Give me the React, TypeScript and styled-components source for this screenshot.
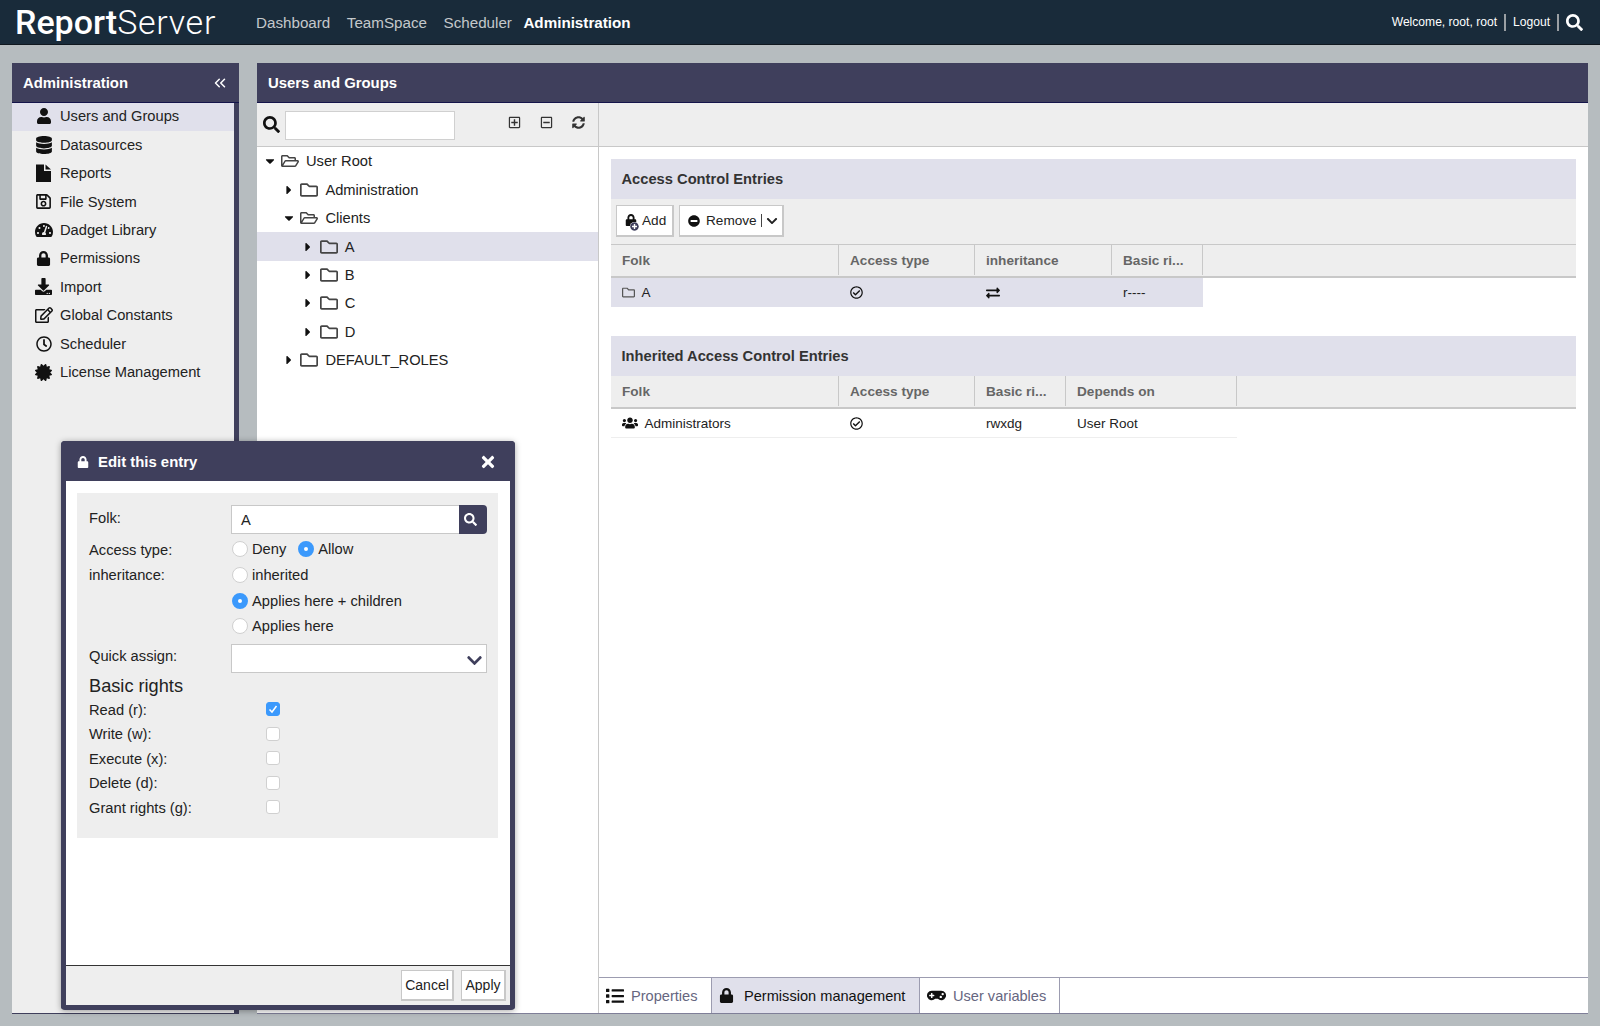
import React from 'react';
import styled, { createGlobalStyle } from 'styled-components';
import {
    FaCaretDown,
    FaCaretRight,
    FaCertificate,
    FaChevronDown,
    FaDatabase,
    FaDownload,
    FaExchangeAlt,
    FaGamepad,
    FaList,
    FaLock,
    FaMinusCircle,
    FaPlusCircle,
    FaRegCheckCircle,
    FaRegClock,
    FaRegEdit,
    FaRegFolder,
    FaRegFolderOpen,
    FaRegMinusSquare,
    FaRegPlusSquare,
    FaRegSave,
    FaSearch,
    FaSyncAlt,
    FaTachometerAlt,
    FaTimes,
    FaUser,
    FaUsers,
} from 'react-icons/fa';
import { FiChevronsLeft } from 'react-icons/fi';

const navy = '#3f3f5c';
const lilac = '#e0e0eb';
const panelGrey = '#eeeeee';
const lineGrey = '#c8c8c8';
const rowHeight = '28.45px';

const GlobalStyle = createGlobalStyle`
    html, body {
        margin: 0;
        padding: 0;
        background: #b6bcbf;
    }
    body {
        font-family: "Liberation Sans", Arial, sans-serif;
        font-size: 14.7px;
        color: #222;
    }
`;

const Page = styled.div`
    position: relative;
    width: 1600px;
    height: 1026px;
    display: flex;
    flex-direction: column;
    overflow: hidden;
`;

const TopBar = styled.header`
    height: 44px;
    flex: none;
    background: #192b3a;
    border-bottom: 1px solid #10181f;
    display: flex;
    align-items: center;
    padding: 0 17px 0 15px;
`;

const Logo = styled.div`
    width: 241px;
    font-family: Roboto, sans-serif;
    font-size: 34px;
    line-height: 44px;
    color: #fff;
    font-weight: 500;
    span {
        font-weight: 300;
        letter-spacing: 0.7px;
    }
`;

const TopNav = styled.nav`
    display: flex;
    gap: 16.5px;
    flex: 1;
`;

const TopLink = styled.a<{ $active?: boolean }>`
    color: ${({ $active }) => ($active ? '#fff' : '#c4c8cb')};
    font-weight: ${({ $active }) => ($active ? 700 : 400)};
    font-size: 15.2px;
    margin-left: ${({ $active }) => ($active ? '-5px' : '0')};
`;

const UserBox = styled.div`
    display: flex;
    align-items: center;
    color: #fff;
    font-size: 12.1px;
    gap: 7px;
`;

const Divider = styled.span`
    width: 2px;
    height: 17px;
    background: #9a9fa3;
`;

const Workspace = styled.main`
    flex: 1;
    min-height: 0;
    display: flex;
    gap: 18px;
    padding: 18px 12px 12px 12px;
`;

const PanelHeader = styled.div`
    height: 40px;
    flex: none;
    box-sizing: border-box;
    background: ${navy};
    border-bottom: 1px solid #14144a;
    color: #fff;
    font-weight: 700;
    font-size: 14.9px;
    display: flex;
    align-items: center;
    justify-content: space-between;
    padding: 0 10px 0 11px;
`;

const SidePanel = styled.aside`
    width: 227px;
    flex: none;
    display: flex;
    flex-direction: column;
`;

const SideBody = styled.div`
    flex: 1;
    background: ${panelGrey};
    border-right: 5px solid ${navy};
    border-bottom: 1px solid ${navy};
`;

const NavRow = styled.div<{ $selected?: boolean }>`
    height: ${rowHeight};
    box-sizing: border-box;
    padding-bottom: 2px;
    display: flex;
    align-items: center;
    background: ${({ $selected }) => ($selected ? lilac : 'transparent')};
`;

const NavIcon = styled.span`
    width: 48px;
    padding-left: 15px;
    box-sizing: border-box;
    flex: none;
    display: flex;
    justify-content: center;
    color: #111;
`;

const MainPanel = styled.section`
    flex: 1;
    min-width: 0;
    display: flex;
    flex-direction: column;
`;

const MainBody = styled.div`
    flex: 1;
    min-height: 0;
    display: flex;
    background: #fff;
    border-bottom: 1px solid #7f7f98;
`;

const TreePane = styled.div`
    width: 341px;
    flex: none;
    border-right: 1px solid ${lineGrey};
    display: flex;
    flex-direction: column;
`;

const PaneToolbar = styled.div`
    height: 44px;
    flex: none;
    box-sizing: border-box;
    background: ${panelGrey};
    border-bottom: 1px solid ${lineGrey};
    display: flex;
    align-items: center;
`;

const SearchInput = styled.input`
    width: 170px;
    height: 29px;
    box-sizing: border-box;
    margin: 1px 0 0 5px;
    border: 1px solid #d0d0d0;
    background: #fff;
    outline: none;
`;

const SearchMark = styled.span`
    display: flex;
    margin-left: 6px;
    font-size: 17px;
    color: #111;
`;

const TreeTools = styled.div`
    display: flex;
    gap: 19px;
    margin-left: 53px;
    margin-top: -4px;
    color: #333;
    font-size: 13px;
`;

const TreeList = styled.div`
    padding-top: 0;
`;

const TreeRow = styled.div<{ $depth: number; $selected?: boolean }>`
    height: ${rowHeight};
    display: flex;
    align-items: center;
    padding-left: ${({ $depth }) => 4 + $depth * 19.4}px;
    background: ${({ $selected }) => ($selected ? lilac : 'transparent')};
`;

const Caret = styled.span`
    width: 17px;
    flex: none;
    display: flex;
    justify-content: center;
    font-size: 14px;
    color: #111;
`;

const FolderIcon = styled.span`
    width: 25px;
    margin-left: 3px;
    flex: none;
    display: flex;
    font-size: 18px;
    color: #444;
`;

const ContentPane = styled.div`
    flex: 1;
    min-width: 0;
    display: flex;
    flex-direction: column;
`;

const ContentScroll = styled.div`
    flex: 1;
    min-height: 0;
    padding: 12px 12px 0 11.5px;
`;

const Section = styled.div<{ $gap?: number }>`
    margin-bottom: ${({ $gap }) => $gap || 0}px;
`;

const SectionTitle = styled.div`
    height: 40px;
    background: ${lilac};
    display: flex;
    align-items: center;
    padding-left: 11px;
    font-weight: 700;
    font-size: 14.7px;
    color: #333;
`;

const ActionBar = styled.div`
    height: 45px;
    box-sizing: border-box;
    background: ${panelGrey};
    display: flex;
    align-items: flex-start;
    padding: 6px 0 0 5.5px;
    gap: 5px;
`;

const ToolButton = styled.button<{ $width: number }>`
    width: ${({ $width }) => $width}px;
    height: 32px;
    box-sizing: border-box;
    background: #fff;
    border: 1px solid ${lineGrey};
    border-width: 1px 2px 2px 1px;
    padding: 0 0 0 8px;
    display: flex;
    align-items: center;
    font: inherit;
    font-size: 13.6px;
    color: #222;
`;

const LockBadge = styled.span`
    position: relative;
    display: flex;
    font-size: 12px;
    color: #111;
    margin-right: 5px;
    margin-top: -2px;
    svg + svg {
        position: absolute;
        right: -2px;
        bottom: -5px;
        font-size: 9px;
        color: ${navy};
        background: #fff;
        border-radius: 50%;
    }
`;

const RemoveIcon = styled.span`
    display: flex;
    color: #111;
    margin-right: 6px;
`;

const SplitMark = styled.span`
    width: 1px;
    height: 13px;
    background: #444;
    margin: 0 4px;
`;

const GridHead = styled.div<{ $cols: string }>`
    height: 34px;
    box-sizing: border-box;
    background: ${panelGrey};
    border-top: 1px solid ${lineGrey};
    border-bottom: 2px solid ${lineGrey};
    padding-bottom: 1px;
    display: grid;
    grid-template-columns: ${({ $cols }) => $cols};
`;

const GridHeadTop = styled(GridHead)`
    border-top: none;
    height: 33px;
`;

const HeadCell = styled.div`
    border-right: 1px solid ${lineGrey};
    display: flex;
    align-items: center;
    padding-left: 11.5px;
    font-weight: 700;
    font-size: 13.6px;
    color: #666;
`;

const GridRow = styled.div<{ $cols: string; $selected?: boolean }>`
    height: 29px;
    box-sizing: border-box;
    display: inline-grid;
    grid-template-columns: ${({ $cols }) => $cols};
    background: ${({ $selected }) => ($selected ? lilac : '#fff')};
    border-bottom: ${({ $selected }) => ($selected ? 'none' : '1px solid #eee')};
    vertical-align: top;
`;

const Cell = styled.div`
    display: flex;
    align-items: center;
    gap: 6.5px;
    padding-left: 11.5px;
    font-size: 13.5px;
    color: #222;
`;

const CellIcon = styled.span<{ $muted?: boolean }>`
    display: flex;
    font-size: 14px;
    color: ${({ $muted }) => ($muted ? '#555' : '#111')};
`;

const TabBar = styled.div`
    height: 36px;
    flex: none;
    box-sizing: border-box;
    border-top: 1px solid #9c9cb0;
    display: flex;
`;

const Tab = styled.div<{ $active?: boolean; $width: number; $iconGap: number }>`
    width: ${({ $width }) => $width}px;
    box-sizing: border-box;
    border-right: 1px solid #9c9cb0;
    background: ${({ $active }) => ($active ? lilac : '#fff')};
    color: ${({ $active }) => ($active ? '#111' : '#666680')};
    display: flex;
    align-items: center;
    padding-left: 7px;
    gap: ${({ $iconGap }) => $iconGap}px;
    font-size: 14.6px;
    svg {
        color: #111;
        flex: none;
    }
`;

const Dialog = styled.div`
    position: absolute;
    left: 61px;
    top: 441px;
    width: 454px;
    height: 569px;
    box-sizing: border-box;
    border: 5px solid ${navy};
    border-top: none;
    border-radius: 4px;
    background: #fff;
    box-shadow: 0 1px 6px rgba(0, 0, 0, 0.35);
    display: flex;
    flex-direction: column;
`;

const DialogHeader = styled.div`
    height: 40px;
    flex: none;
    box-sizing: border-box;
    margin: 0 -5px;
    background: ${navy};
    border-radius: 4px 4px 0 0;
    color: #fff;
    font-weight: 700;
    font-size: 14.9px;
    display: flex;
    align-items: center;
    padding: 1px 18px 0 16px;
    gap: 9px;
    svg:first-child {
        font-size: 12px;
    }
    svg:last-child {
        font-size: 18px;
        margin-left: auto;
    }
`;

const DialogBody = styled.div`
    flex: 1;
    min-height: 0;
    padding: 12px 12px 0 11px;
`;

const FormPanel = styled.div`
    height: 345px;
    box-sizing: border-box;
    background: ${panelGrey};
    padding: 12px 12px 0 12px;
`;

const FormRow = styled.div<{ $height: number; $labelWidth?: number; $top?: boolean }>`
    height: ${({ $height }) => $height}px;
    display: grid;
    grid-template-columns: ${({ $labelWidth }) => $labelWidth || 142}px 1fr;
    align-items: ${({ $top }) => ($top ? 'start' : 'center')};
`;

const FormLabel = styled.label`
    color: #222;
    font-size: 14.7px;
`;

const FolkLabel = styled(FormLabel)`
    padding-top: 5px;
`;

const InputGroup = styled.div`
    display: flex;
    height: 29px;
    box-sizing: border-box;
    width: 256px;
`;

const FolkInput = styled.div`
    flex: 1;
    box-sizing: border-box;
    background: #fff;
    border: 1px solid ${lineGrey};
    border-right: none;
    padding-left: 9px;
    display: flex;
    align-items: center;
`;

const FolkButton = styled.span`
    width: 28px;
    box-sizing: border-box;
    padding-right: 5px;
    background: ${navy};
    border-radius: 0 4px 4px 0;
    color: #fff;
    display: flex;
    align-items: center;
    justify-content: center;
    font-size: 13px;
`;

const SelectBox = styled.div`
    width: 256px;
    height: 29px;
    align-self: end;
    box-sizing: border-box;
    background: #fff;
    border: 1px solid ${lineGrey};
    display: flex;
    align-items: center;
    justify-content: flex-end;
    padding: 3px 3px 0 0;
    color: ${navy};
    font-size: 17px;
`;

const RadioGroup = styled.div`
    display: flex;
    align-items: center;
    gap: 11px;
    margin-top: -2px;
`;

const RadioLabel = styled.label`
    display: flex;
    align-items: center;
    gap: 4px;
    margin-left: 1px;
    color: #222;
    font-size: 14.7px;
`;

const RadioInput = styled.input.attrs({ type: 'radio', readOnly: true })`
    appearance: none;
    margin: 0;
    width: 16px;
    height: 16px;
    box-sizing: border-box;
    border-radius: 50%;
    background: #fff;
    border: 1px solid #d0d0d0;
    &:checked {
        background: #fff;
        border: 6px solid #3b99fc;
    }
`;

const RightsTitle = styled.div`
    height: 21.5px;
    margin-top: 3px;
    font-size: 18.2px;
    color: #222;
    display: flex;
    align-items: center;
`;

const RightBox = styled.span<{ $checked?: boolean }>`
    width: 14px;
    height: 14px;
    margin-top: -1px;
    box-sizing: border-box;
    border-radius: 3px;
    background: ${({ $checked }) => ($checked ? '#3b99fc' : '#fff')};
    border: 1px solid ${({ $checked }) => ($checked ? '#3b99fc' : '#d0d0d0')};
    display: flex;
    align-items: center;
    justify-content: center;
`;

const DialogFooter = styled.div`
    height: 40px;
    flex: none;
    box-sizing: border-box;
    background: ${panelGrey};
    border-top: 1px solid #333;
    display: flex;
    justify-content: flex-end;
    align-items: center;
    gap: 7px;
    padding-right: 4px;
`;

const FooterButton = styled.button<{ $width: number }>`
    width: ${({ $width }) => $width}px;
    height: 31px;
    box-sizing: border-box;
    background: #fff;
    border: 1px solid ${lineGrey};
    border-width: 1px 2px 2px 1px;
    padding: 0;
    font: inherit;
    font-size: 14px;
    color: #222;
`;

// fa-file of the old icon set: a solid page with the corner folded off
const FileGlyph: React.FC = () => (
    <svg width="15" height="18" viewBox="0 0 15 18" fill="currentColor">
        <path d="M0 0.5 H8 V7 H15 V18 H0 Z" />
        <path d="M9.5 0.5 L15 5.5 H9.5 Z" />
    </svg>
);

const navItems = [
    { label: 'Users and Groups', icon: <FaUser size={16} />, selected: true },
    { label: 'Datasources', icon: <FaDatabase size={18} /> },
    { label: 'Reports', icon: <FileGlyph /> },
    { label: 'File System', icon: <FaRegSave size={17} /> },
    { label: 'Dadget Library', icon: <FaTachometerAlt size={18} /> },
    { label: 'Permissions', icon: <FaLock size={15} /> },
    { label: 'Import', icon: <FaDownload size={17} /> },
    { label: 'Global Constants', icon: <FaRegEdit size={18} /> },
    { label: 'Scheduler', icon: <FaRegClock size={16} /> },
    { label: 'License Management', icon: <FaCertificate size={17} /> },
];

const treeItems = [
    { label: 'User Root', depth: 0, open: true },
    { label: 'Administration', depth: 1 },
    { label: 'Clients', depth: 1, open: true },
    { label: 'A', depth: 2, selected: true },
    { label: 'B', depth: 2 },
    { label: 'C', depth: 2 },
    { label: 'D', depth: 2 },
    { label: 'DEFAULT_ROLES', depth: 1 },
];

const inheritanceOptions = [
    { label: 'inherited', checked: false },
    { label: 'Applies here + children', checked: true },
    { label: 'Applies here', checked: false },
];

const rights = [
    { label: 'Read (r):', checked: true },
    { label: 'Write (w):' },
    { label: 'Execute (x):' },
    { label: 'Delete (d):' },
    { label: 'Grant rights (g):' },
];

const aclCols = '228px 136px 137px 91px 1fr';
const aclRowCols = '228px 136px 137px 91px';
const inheritedCols = '228px 136px 91px 171px 1fr';
const inheritedRowCols = '228px 136px 91px 171px';

const App: React.FC = () => {
    return (
        <Page>
            <GlobalStyle />
            <TopBar>
                <Logo>
                    Report<span>Server</span>
                </Logo>
                <TopNav>
                    <TopLink>Dashboard</TopLink>
                    <TopLink>TeamSpace</TopLink>
                    <TopLink>Scheduler</TopLink>
                    <TopLink $active>Administration</TopLink>
                </TopNav>
                <UserBox>
                    <span>Welcome, root, root</span>
                    <Divider />
                    <span>Logout</span>
                    <Divider />
                    <FaSearch size={17} />
                </UserBox>
            </TopBar>
            <Workspace>
                <SidePanel>
                    <PanelHeader>
                        Administration
                        <FiChevronsLeft size={18} />
                    </PanelHeader>
                    <SideBody>
                        {navItems.map((item) => (
                            <NavRow key={item.label} $selected={item.selected}>
                                <NavIcon>{item.icon}</NavIcon>
                                {item.label}
                            </NavRow>
                        ))}
                    </SideBody>
                </SidePanel>
                <MainPanel>
                    <PanelHeader>Users and Groups</PanelHeader>
                    <MainBody>
                        <TreePane>
                            <PaneToolbar>
                                <SearchMark>
                                    <FaSearch />
                                </SearchMark>
                                <SearchInput />
                                <TreeTools>
                                    <FaRegPlusSquare />
                                    <FaRegMinusSquare />
                                    <FaSyncAlt />
                                </TreeTools>
                            </PaneToolbar>
                            <TreeList>
                                {treeItems.map((item) => (
                                    <TreeRow key={item.label} $depth={item.depth} $selected={item.selected}>
                                        <Caret>{item.open ? <FaCaretDown /> : <FaCaretRight />}</Caret>
                                        <FolderIcon>
                                            {item.open ? <FaRegFolderOpen /> : <FaRegFolder />}
                                        </FolderIcon>
                                        {item.label}
                                    </TreeRow>
                                ))}
                            </TreeList>
                        </TreePane>
                        <ContentPane>
                            <PaneToolbar />
                            <ContentScroll>
                                <Section $gap={29}>
                                    <SectionTitle>Access Control Entries</SectionTitle>
                                    <ActionBar>
                                        <ToolButton $width={58}>
                                            <LockBadge>
                                                <FaLock />
                                                <FaPlusCircle />
                                            </LockBadge>
                                            Add
                                        </ToolButton>
                                        <ToolButton $width={105}>
                                            <RemoveIcon>
                                                <FaMinusCircle size={12} />
                                            </RemoveIcon>
                                            Remove
                                            <SplitMark />
                                            <FaChevronDown size={12} />
                                        </ToolButton>
                                    </ActionBar>
                                    <GridHead $cols={aclCols}>
                                        <HeadCell>Folk</HeadCell>
                                        <HeadCell>Access type</HeadCell>
                                        <HeadCell>inheritance</HeadCell>
                                        <HeadCell>Basic ri...</HeadCell>
                                    </GridHead>
                                    <GridRow $cols={aclRowCols} $selected>
                                        <Cell>
                                            <CellIcon $muted>
                                                <FaRegFolder size={13} />
                                            </CellIcon>
                                            A
                                        </Cell>
                                        <Cell>
                                            <CellIcon>
                                                <FaRegCheckCircle size={13} />
                                            </CellIcon>
                                        </Cell>
                                        <Cell>
                                            <CellIcon>
                                                <FaExchangeAlt size={14} />
                                            </CellIcon>
                                        </Cell>
                                        <Cell>r----</Cell>
                                    </GridRow>
                                </Section>
                                <Section>
                                    <SectionTitle>Inherited Access Control Entries</SectionTitle>
                                    <GridHeadTop $cols={inheritedCols}>
                                        <HeadCell>Folk</HeadCell>
                                        <HeadCell>Access type</HeadCell>
                                        <HeadCell>Basic ri...</HeadCell>
                                        <HeadCell>Depends on</HeadCell>
                                    </GridHeadTop>
                                    <GridRow $cols={inheritedRowCols}>
                                        <Cell>
                                            <CellIcon>
                                                <FaUsers size={16} />
                                            </CellIcon>
                                            Administrators
                                        </Cell>
                                        <Cell>
                                            <CellIcon>
                                                <FaRegCheckCircle size={13} />
                                            </CellIcon>
                                        </Cell>
                                        <Cell>rwxdg</Cell>
                                        <Cell>User Root</Cell>
                                    </GridRow>
                                </Section>
                            </ContentScroll>
                            <TabBar>
                                <Tab $width={113} $iconGap={7}>
                                    <FaList size={18} />
                                    Properties
                                </Tab>
                                <Tab $width={208} $iconGap={10} $active>
                                    <FaLock size={15} />
                                    Permission management
                                </Tab>
                                <Tab $width={140} $iconGap={7}>
                                    <FaGamepad size={19} />
                                    User variables
                                </Tab>
                            </TabBar>
                        </ContentPane>
                    </MainBody>
                </MainPanel>
            </Workspace>
            <Dialog>
                <DialogHeader>
                    <FaLock />
                    Edit this entry
                    <FaTimes />
                </DialogHeader>
                <DialogBody>
                    <FormPanel>
                        <FormRow $height={32} $top>
                            <FolkLabel>Folk:</FolkLabel>
                            <InputGroup>
                                <FolkInput>A</FolkInput>
                                <FolkButton>
                                    <FaSearch />
                                </FolkButton>
                            </InputGroup>
                        </FormRow>
                        <FormRow $height={25.5}>
                            <FormLabel>Access type:</FormLabel>
                            <RadioGroup>
                                <RadioLabel>
                                    <RadioInput />
                                    Deny
                                </RadioLabel>
                                <RadioLabel>
                                    <RadioInput defaultChecked />
                                    Allow
                                </RadioLabel>
                            </RadioGroup>
                        </FormRow>
                        {inheritanceOptions.map((option, index) => (
                            <FormRow key={option.label} $height={25.5}>
                                <FormLabel>{index === 0 ? 'inheritance:' : ''}</FormLabel>
                                <RadioLabel>
                                    <RadioInput defaultChecked={option.checked} />
                                    {option.label}
                                </RadioLabel>
                            </FormRow>
                        ))}
                        <FormRow $height={34}>
                            <FormLabel>Quick assign:</FormLabel>
                            <SelectBox>
                                <FaChevronDown />
                            </SelectBox>
                        </FormRow>
                        <RightsTitle>Basic rights</RightsTitle>
                        {rights.map((right) => (
                            <FormRow key={right.label} $height={24.5} $labelWidth={177}>
                                <FormLabel>{right.label}</FormLabel>
                                <RightBox $checked={right.checked}>
                                    {right.checked && (
                                        <svg width="10" height="10" viewBox="0 0 10 10">
                                            <path d="M1.5 5.5 L4 8 L8.5 2" stroke="#fff" strokeWidth="1.5" fill="none" />
                                        </svg>
                                    )}
                                </RightBox>
                            </FormRow>
                        ))}
                    </FormPanel>
                </DialogBody>
                <DialogFooter>
                    <FooterButton $width={53}>Cancel</FooterButton>
                    <FooterButton $width={45}>Apply</FooterButton>
                </DialogFooter>
            </Dialog>
        </Page>
    );
};

export default App;
